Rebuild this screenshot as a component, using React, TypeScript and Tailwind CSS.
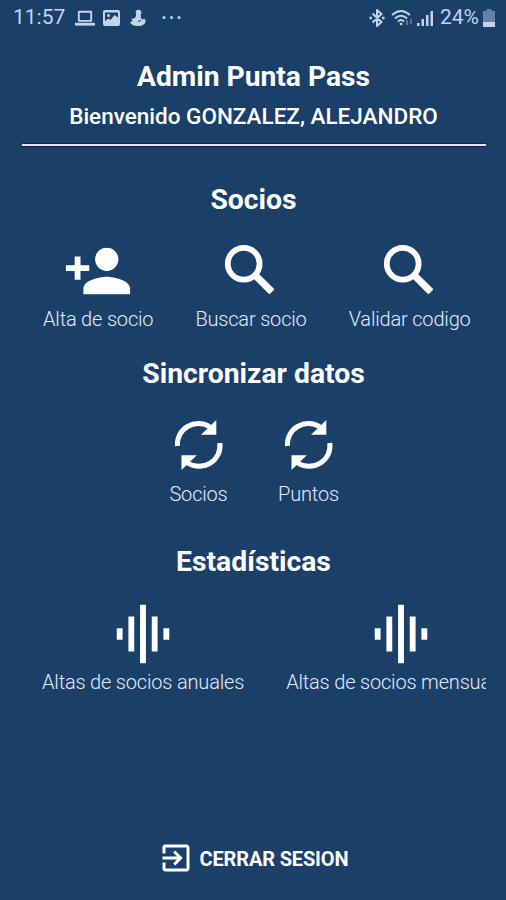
import type { ReactNode } from 'react';
import { MdExitToApp, MdGraphicEq, MdPersonAdd } from 'react-icons/md';

function SearchIcon() {
  return (
    <svg width="70" height="70" viewBox="0 0 70 70" fill="none" stroke="currentColor">
      <circle cx="27.700" cy="27.700" r="15.900" strokeWidth="5.800" />
      <path d="M38.500 42l3.500-3.500L57 53.200 53.400 57z" fill="currentColor" strokeWidth="2" strokeLinejoin="round" />
    </svg>
  );
}

function SyncIcon() {
  return (
    <svg width="68" height="70" viewBox="1 1 68 70" fill="none">
      <path d="M13.500 36A21 20.500 0 0 1 46 17" stroke="currentColor" strokeWidth="5" />
      <path d="M52.300 10v14.800H37z" fill="currentColor" />
      <path d="M55.800 33A21 20.500 0 0 1 23.500 53" stroke="currentColor" strokeWidth="5" />
      <path d="M17.500 60V45.300h15.300z" fill="currentColor" />
    </svg>
  );
}

function StatusBar() {
  return (
    <div className="flex h-9 items-center justify-between pl-[13px] pr-[11px] text-[21px] text-[#c3d5ea]">
      <div className="flex items-center">
        <span className="w-[52px] whitespace-nowrap">11:57</span>
        <svg className="ml-[10px]" width="20" height="18" viewBox="0 0 21 18" fill="none" stroke="currentColor">
          <path d="M4 2.500h13v9.500H4z" strokeWidth="2" strokeLinejoin="round" />
          <path d="M0 15.500h21" strokeWidth="3" />
        </svg>
        <svg className="ml-[8px]" width="17" height="18" viewBox="0 0 17 18">
          <rect y="1" width="17" height="16" rx="2" fill="currentColor" />
          <path d="M2 3.500h13v5l-3.500-2.500-4 5-2-1.500L2 12z" fill="#1a3f69" />
          <circle cx="5.500" cy="6.500" r="1.500" fill="currentColor" />
        </svg>
        <svg className="ml-[10px]" width="16" height="18" viewBox="0 0 16 18" fill="currentColor">
          <circle cx="8.500" cy="3.500" r="2.800" />
          <path d="M6.500 5h4l.5 4c1 1.500 1.500 2 3 .5l1.500 1.500c.5 4-3 6-7.500 6s-7-1.500-8-4l3-1-2-2 4-1z" />
          <path d="M8 12.500l3-1" stroke="#1a3f69" />
        </svg>
        <svg className="ml-[16px]" width="20" height="18" viewBox="0 0 20 18" fill="currentColor">
          <circle cx="2" cy="8.500" r="1.500" />
          <circle cx="9.500" cy="8.500" r="1.500" />
          <circle cx="17" cy="8.500" r="1.500" />
        </svg>
      </div>
      <div className="flex items-center">
        <svg width="16" height="18" viewBox="0 0 16 18" fill="none" stroke="currentColor" strokeWidth="2">
          <path d="M3.500 4.500l9 8.500-4.500 4V1l4.500 4-9 8.500" strokeLinejoin="round" />
          <path d="M.5 9H3M13 9h2.500" strokeWidth="2.500" />
        </svg>
        <svg className="ml-[6px]" width="22" height="18" viewBox="0 0 22 18" fill="none" stroke="currentColor" strokeWidth="2">
          <path d="M1 6q9-8 18 0M4 9.500q6-5.500 12 0M7 12.500q3-3 6 0" />
          <circle cx="10" cy="15" r="1.300" fill="currentColor" stroke="none" />
          <path d="M16 11v5M20 10v5" opacity=".35" />
        </svg>
        <svg className="ml-[4px]" width="17" height="18" viewBox="0 0 17 18" fill="currentColor">
          <path d="M0 14h2.500v3H0zM4.500 10H7v7H4.500zM9 6h2.500v11H9zM13.500 2H16v15h-2.500z" />
        </svg>
        <span className="ml-[6px] w-[39px] whitespace-nowrap">24%</span>
        <svg className="ml-[4px]" width="12" height="18" viewBox="0 0 12 18" fill="currentColor">
          <path d="M3.500 0h5v2H12v16H0V2h3.500z" opacity=".45" />
          <path d="M0 13h12v5H0z" />
        </svg>
      </div>
    </div>
  );
}

function SectionTitle({ children }: { children: ReactNode }) {
  return <h2 className="h-9 text-center text-[28.3px] leading-9 font-bold">{children}</h2>;
}

function Action({ icon, label }: { icon: ReactNode; label: string }) {
  return (
    <button className="mx-[21px] flex shrink-0 flex-col items-center">
      {icon}
      <span className="h-[26px] text-[20px] leading-[26px] font-light tracking-[-0.18px] whitespace-nowrap text-[#e2ecfa]">
        {label}
      </span>
    </button>
  );
}

export default function App() {
  return (
    <div className="flex h-[900px] w-[506px] flex-col overflow-hidden bg-[#1a3f69] font-['Roboto',sans-serif] text-white">
      <StatusBar />

      {/* Header */}
      <header className="mr-5 ml-[22px] flex h-[112px] flex-col pt-[23px] text-center">
        <h1 className="mr-px text-[28.200px] leading-9 font-bold">Admin Punta Pass</h1>
        <p className="mt-[3px] mr-px text-[22.500px] leading-9 font-medium">Bienvenido GONZALEZ, ALEJANDRO</p>
        <div className="mt-auto mb-px h-1 border-y border-[#15205f] bg-[#e6e4ff]" />
      </header>

      {/* Sections */}
      <main className="mr-5 ml-[21px] flex-1">
        <section className="pt-[34px]">
          <SectionTitle>Socios</SectionTitle>
          <div className="mt-[18px] flex overflow-hidden pl-px">
            <Action icon={<MdPersonAdd size={70} />} label="Alta de socio" />
            <Action icon={<SearchIcon />} label="Buscar socio" />
            <Action icon={<SearchIcon />} label="Validar codigo" />
          </div>
        </section>

        <section className="pt-[24px]">
          <SectionTitle>Sincronizar datos</SectionTitle>
          <div className="mt-[19px] flex justify-center">
            <Action icon={<SyncIcon />} label="Socios" />
            <Action icon={<SyncIcon />} label="Puntos" />
          </div>
        </section>

        <section className="pt-[37px]">
          <SectionTitle>Estadísticas</SectionTitle>
          <div className="mt-[19px] flex overflow-hidden">
            <Action icon={<MdGraphicEq size={70} />} label="Altas de socios anuales" />
            <Action icon={<MdGraphicEq size={70} />} label="Altas de socios mensuales" />
          </div>
        </section>
      </main>

      <button className="mb-[24px] flex h-9 items-center justify-center gap-[6px] text-[20px] font-bold">
        <MdExitToApp size={36} />
        <span className="pt-[2px] tracking-[-0.15px]">CERRAR SESION</span>
      </button>
    </div>
  );
}
